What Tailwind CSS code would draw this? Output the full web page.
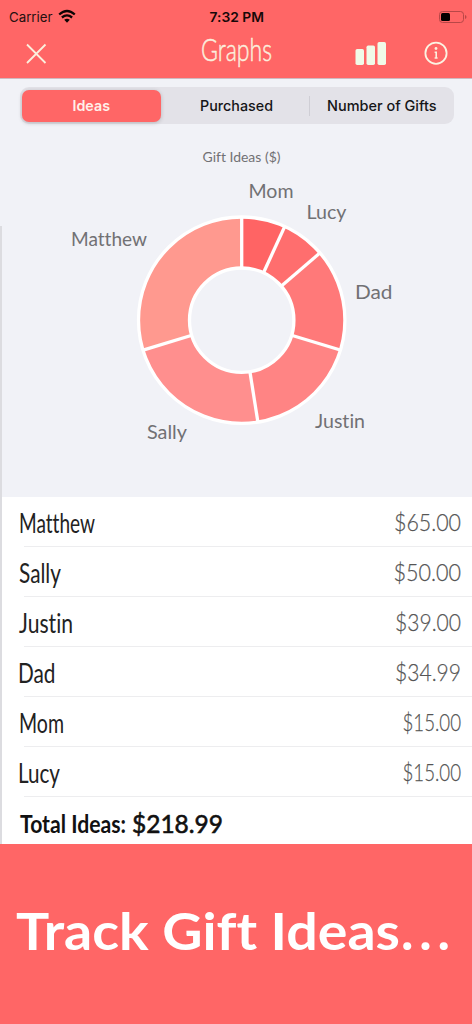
<!DOCTYPE html>
<html lang="en">
<head>
<meta charset="utf-8">
<title>Graphs</title>
<script src="https://cdn.jsdelivr.net/npm/@tailwindcss/browser@4"></script>
</head>
<body class="w-[472px] h-[1024px] overflow-hidden bg-[#ff6666] flex flex-col [font-variant-ligatures:none]">
<header class="h-[78px] shrink-0 bg-[#ff6666]">
  <svg class="block" width="472" height="78" viewBox="0 0 472 78">
    <g font-family="Inter, sans-serif" font-size="13">
      <text x="9" y="22" textLength="43.5" lengthAdjust="spacingAndGlyphs" fill="#241010">Carrier</text>
      <text x="209.500" y="22" textLength="54.500" lengthAdjust="spacingAndGlyphs" font-weight="600" fill="#160808">7:32 PM</text>
    </g>
    <g fill="none" stroke="#0d0404" stroke-width="2.300">
      <path d="M59.200 14.500Q67 7.500 74.800 14.500"/>
      <path d="M61.900 17.500Q67 13.200 72.100 17.500"/>
    </g>
    <path d="M64.200 19.700Q67 17.800 69.800 19.700L67 22.800Z" fill="#0d0404"/>
    <rect x="439.500" y="11.500" width="24" height="11" rx="3" fill="none" stroke="#b84747"/>
    <rect x="441" y="13" width="9" height="8" rx="1.500" fill="#050000"/>
    <path d="M465 15v4q1.500-.6 1.500-2t-1.500-2" fill="#b84747"/>
    <path d="M27 44.500 45.500 63M45.500 44.500 27 63" stroke="#fbf0dd" stroke-width="1.800" fill="none"/>
    <text x="201" y="61" textLength="71" lengthAdjust="spacingAndGlyphs" font-family="Lato, sans-serif" font-weight="300" font-size="31" fill="#fbeedd" stroke="#fbeedd" stroke-width=".5">Graphs</text>
    <g fill="#f0fae8">
      <rect x="355.500" y="49" width="8.500" height="16" rx="1.700"/>
      <rect x="366.500" y="45.500" width="8.500" height="19.500" rx="1.700"/>
      <rect x="377.500" y="42" width="8.500" height="23" rx="1.700"/>
    </g>
    <circle cx="436" cy="53.200" r="10.600" fill="none" stroke="#fbf3e2" stroke-width="1.800"/>
    <circle cx="436" cy="48.500" r="1.400" fill="#fbeedd"/>
    <path d="M434.600 52.200h1.600v5.800M434.600 58h3" fill="none" stroke="#fbeedd" stroke-width="1.600"/>
  </svg>
</header>

<main class="h-[766px] shrink-0 bg-white flex flex-col relative">
  <section class="h-[419px] shrink-0 bg-[#f1f2f7] border-t border-[#cfb9c0] flex flex-col">
    <nav class="mt-[8px] ml-[20px] w-[434px] h-[37px] rounded-[9px] bg-[#e3e2e8] p-[2px] flex items-center text-[15px] text-[#111] font-['Inter',sans-serif]">
      <div class="w-[139px] h-[32px] rounded-[7px] bg-[#ff6666] shadow-[0_1px_4px_rgba(0,0,0,0.2)]">
        <svg class="block" width="139" height="32"><text x="50.500" y="21" textLength="37.500" lengthAdjust="spacingAndGlyphs" font-size="14.500" font-weight="600" fill="#fff1ea">Ideas</text></svg>
      </div>
      <svg class="block" width="291" height="32"><g font-size="14.500" font-weight="500" fill="#151517"><text x="39" y="21" textLength="73" lengthAdjust="spacingAndGlyphs">Purchased</text><text x="166" y="21" textLength="109.500" lengthAdjust="spacingAndGlyphs">Number of Gifts</text></g><path d="M148.500 6V26" stroke="#cfced5"/></svg>
    </nav>
    <svg class="block" width="472" height="370" viewBox="0 123.500 472 370">
      <g transform="translate(241.700 319.700) rotate(-90)" fill="none" stroke-width="51">
        <circle r="77.500" stroke="#ff6464" pathLength="218.990" stroke-dasharray="15 400"/>
        <circle r="77.500" stroke="#ff6e6e" pathLength="218.990" stroke-dasharray="15 400" stroke-dashoffset="-15"/>
        <circle r="77.500" stroke="#ff7979" pathLength="218.990" stroke-dasharray="34.990 400" stroke-dashoffset="-30"/>
        <circle r="77.500" stroke="#ff8484" pathLength="218.990" stroke-dasharray="39 400" stroke-dashoffset="-64.990"/>
        <circle r="77.500" stroke="#ff8f8e" pathLength="218.990" stroke-dasharray="50 400" stroke-dashoffset="-103.990"/>
        <circle r="77.500" stroke="#ff998f" pathLength="218.990" stroke-dasharray="65 400" stroke-dashoffset="-153.990"/>
        <g stroke="#fff" stroke-width="3.300">
          <circle r="103.200"/><circle r="52.200"/>
          <path d="M52 0H103"/>
          <path d="M52 0H103" transform="rotate(24.660)"/>
          <path d="M52 0H103" transform="rotate(49.320)"/>
          <path d="M52 0H103" transform="rotate(106.840)"/>
          <path d="M52 0H103" transform="rotate(170.950)"/>
          <path d="M52 0H103" transform="rotate(253.150)"/>
        </g>
      </g>
      <g font-family="Lato, sans-serif" font-size="19.500" fill="#717174">
        <text x="202.500" y="161.500" font-size="13" textLength="78" lengthAdjust="spacingAndGlyphs">Gift Ideas ($)</text>
        <text x="248.500" y="197.500" textLength="45" lengthAdjust="spacingAndGlyphs">Mom</text>
        <text x="306.500" y="218.500" textLength="40" lengthAdjust="spacingAndGlyphs">Lucy</text>
        <text x="355" y="298.500" textLength="37.500" lengthAdjust="spacingAndGlyphs">Dad</text>
        <text x="315" y="427.500" textLength="50" lengthAdjust="spacingAndGlyphs">Justin</text>
        <text x="147" y="438.500" textLength="40" lengthAdjust="spacingAndGlyphs">Sally</text>
        <text x="71" y="245.500" textLength="76" lengthAdjust="spacingAndGlyphs">Matthew</text>
      </g>
    </svg>
  </section>

  <section class="flex-1 flex flex-col bg-white font-['Lato',sans-serif]">
    <div class="h-[50px]"><svg class="block" width="472" height="50"><text x="19" y="36" textLength="76" lengthAdjust="spacingAndGlyphs" font-size="27" fill="#222">Matthew</text><text x="394" y="34" textLength="67" lengthAdjust="spacingAndGlyphs" font-size="24" font-weight="300" fill="#555" stroke="#555" stroke-width=".25">$65.00</text><path d="M24 49.500H472" stroke="#ededef"/></svg></div>
    <div class="h-[50px]"><svg class="block" width="472" height="50"><text x="19" y="36" textLength="42" lengthAdjust="spacingAndGlyphs" font-size="27" fill="#222">Sally</text><text x="393.500" y="34" textLength="67.500" lengthAdjust="spacingAndGlyphs" font-size="24" font-weight="300" fill="#555" stroke="#555" stroke-width=".25">$50.00</text><path d="M24 49.500H472" stroke="#ededef"/></svg></div>
    <div class="h-[50px]"><svg class="block" width="472" height="50"><text x="19" y="36" textLength="54" lengthAdjust="spacingAndGlyphs" font-size="27" fill="#222">Justin</text><text x="395" y="34" textLength="66" lengthAdjust="spacingAndGlyphs" font-size="24" font-weight="300" fill="#555" stroke="#555" stroke-width=".25">$39.00</text><path d="M24 49.500H472" stroke="#ededef"/></svg></div>
    <div class="h-[50px]"><svg class="block" width="472" height="50"><text x="18" y="36" textLength="37.500" lengthAdjust="spacingAndGlyphs" font-size="27" fill="#222">Dad</text><text x="395" y="34" textLength="66" lengthAdjust="spacingAndGlyphs" font-size="24" font-weight="300" fill="#555" stroke="#555" stroke-width=".25">$34.99</text><path d="M24 49.500H472" stroke="#ededef"/></svg></div>
    <div class="h-[50px]"><svg class="block" width="472" height="50"><text x="19" y="36" textLength="45" lengthAdjust="spacingAndGlyphs" font-size="27" fill="#222">Mom</text><text x="402.500" y="34" textLength="58.500" lengthAdjust="spacingAndGlyphs" font-size="24" font-weight="300" fill="#555" stroke="#555" stroke-width=".25">$15.00</text><path d="M24 49.500H472" stroke="#ededef"/></svg></div>
    <div class="h-[50px]"><svg class="block" width="472" height="50"><text x="18" y="36" textLength="42" lengthAdjust="spacingAndGlyphs" font-size="27" fill="#222">Lucy</text><text x="402.500" y="34" textLength="58.500" lengthAdjust="spacingAndGlyphs" font-size="24" font-weight="300" fill="#555" stroke="#555" stroke-width=".25">$15.00</text><path d="M24 49.500H472" stroke="#ededef"/></svg></div>
    <div class="h-[47px]"><svg class="block" width="472" height="47"><text x="20" y="36" textLength="106" lengthAdjust="spacingAndGlyphs" font-size="25.500" font-weight="700" fill="#111">Total Ideas:</text><text x="132" y="36" textLength="91" lengthAdjust="spacingAndGlyphs" font-size="25.500" fill="#111" stroke="#111" stroke-width=".6">$218.99</text></svg></div>
  </section>
  <div class="absolute left-0 top-[148px] w-[2px] h-[618px] bg-[#dcdce0]"></div>
</main>

<footer class="h-[180px] shrink-0 bg-[#ff6666]">
  <svg class="block" width="472" height="180"><g font-family="Lato, sans-serif" font-weight="700" font-size="52.500" fill="#fff"><text x="16" y="105.500" textLength="384" lengthAdjust="spacingAndGlyphs">Track Gift Ideas</text><text x="401" y="105.500" textLength="49" lengthAdjust="spacing">...</text></g></svg>
</footer>
</body>
</html>
